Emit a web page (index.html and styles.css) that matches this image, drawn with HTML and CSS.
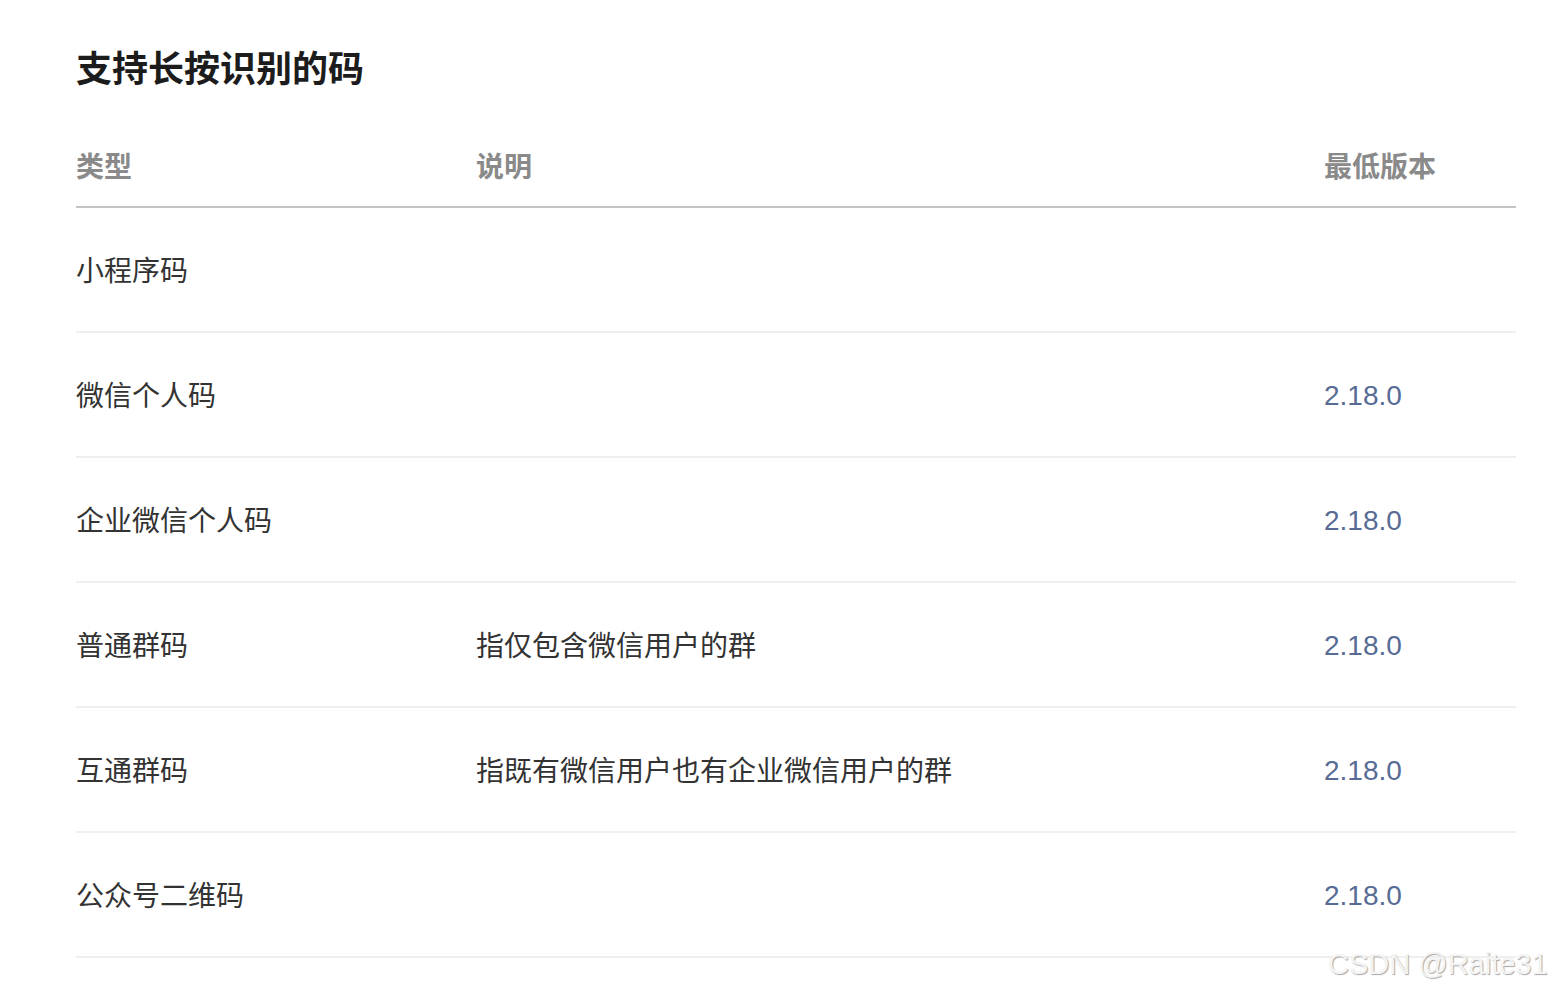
FILE: index.html
```html
<!DOCTYPE html>
<html lang="zh-CN">
<head>
<meta charset="utf-8">
<title>支持长按识别的码</title>
<link rel="stylesheet" href="styles.css">
</head>
<body>
<main class="page">
  <h2 class="title">支持长按识别的码</h2>
  <table class="codes">
    <thead>
      <tr>
        <th class="c-type">类型</th>
        <th class="c-desc">说明</th>
        <th class="c-ver">最低版本</th>
      </tr>
    </thead>
    <tbody>
      <tr><td>小程序码</td><td></td><td class="ver"></td></tr>
      <tr><td>微信个人码</td><td></td><td class="ver">2.18.0</td></tr>
      <tr><td>企业微信个人码</td><td></td><td class="ver">2.18.0</td></tr>
      <tr><td>普通群码</td><td>指仅包含微信用户的群</td><td class="ver">2.18.0</td></tr>
      <tr><td>互通群码</td><td>指既有微信用户也有企业微信用户的群</td><td class="ver">2.18.0</td></tr>
      <tr><td>公众号二维码</td><td></td><td class="ver">2.18.0</td></tr>
    </tbody>
  </table>
</main>
<div class="watermark">CSDN @Raite31</div>
</body>
</html>
```
FILE: styles.css
```css
html, body {
  margin: 0;
  padding: 0;
  background: #ffffff;
}
body {
  font-family: "Noto Sans CJK SC", "Noto Sans", sans-serif;
  color: #333333;
  width: 1550px;
  height: 992px;
  overflow: hidden;
  position: relative;
}
.page {
  padding: 41px 0 0 76px;
  width: 1440px;
}
.title {
  margin: 0;
  font-size: 36px;
  line-height: 50px;
  font-weight: 700;
  color: #1c1c1c;
}
.codes {
  margin-top: 55px;
  width: 1440px;
  border-collapse: collapse;
  table-layout: fixed;
}
.codes th {
  text-align: left;
  font-size: 28px;
  line-height: 38px;
  font-weight: 700;
  color: #8a8a8a;
  padding: 0 0 22px 0;
  border-bottom: 2px solid #c4c4c4;
}
.c-type { width: 400px; }
.c-desc { width: 848px; }
.c-ver { width: 192px; }
.codes td {
  font-size: 28px;
  line-height: 40px;
  height: 121px;
  padding: 0 0 2px 0;
  vertical-align: middle;
  border-bottom: 2px solid #efefef;
  color: #333333;
}
.codes td.ver {
  font-family: "Liberation Sans", Arial, sans-serif;
  font-size: 28px;
  color: #576b95;
  padding: 2px 0 0 0;
}
.watermark {
  position: absolute;
  left: 1328px;
  top: 945px;
  font-family: "Liberation Sans", Arial, sans-serif;
  font-size: 29px;
  line-height: 38px;
  color: #f4f4f4;
  text-shadow: 1px 1px 1px #a8a8a8;
  white-space: nowrap;
}
```
